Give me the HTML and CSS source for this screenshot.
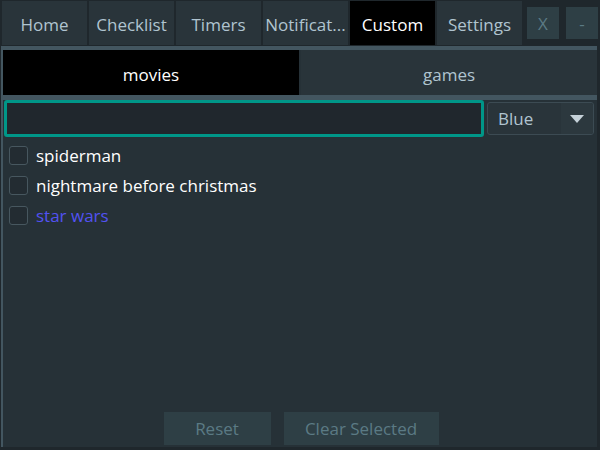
FILE: index.html
```html
<!DOCTYPE html>
<html>
<head>
<meta charset="utf-8">
<link rel="stylesheet" href="styles.css">
</head>
<body>
<div class="window">
  <div class="tabbar">
    <div class="tab">Home</div>
    <div class="tab">Checklist</div>
    <div class="tab">Timers</div>
    <div class="tab">Notificat...</div>
    <div class="tab active">Custom</div>
    <div class="tab">Settings</div>
    <div class="winbtns">
      <div class="winbtn">X</div>
      <div class="winbtn">-</div>
    </div>
  </div>
  <div class="pane">
    <div class="subtabs">
      <div class="subtab active">movies</div>
      <div class="subtab">games</div>
    </div>
    <div class="subpane">
      <div class="entry-row">
        <div class="entry"></div>
        <div class="combo">
          <span class="combo-text">Blue</span>
          <span class="combo-arrow"><svg width="14" height="8" viewBox="0 0 14 8"><path d="M0 0 H14 L7 8 Z" fill="#c5d1d8"/></svg></span>
        </div>
      </div>
      <div class="items">
        <div class="item"><span class="box"></span><span class="label">spiderman</span></div>
        <div class="item"><span class="box"></span><span class="label">nightmare before christmas</span></div>
        <div class="item"><span class="box"></span><span class="label blue">star wars</span></div>
      </div>
      <div class="actions">
        <div class="btn reset">Reset</div>
        <div class="btn clear">Clear Selected</div>
      </div>
    </div>
  </div>
</div>
</body>
</html>
```
FILE: styles.css
```css
html, body {
  margin: 0;
  padding: 0;
}
body {
  width: 600px;
  height: 450px;
  background: #1f272c;
  font-family: "Open Sans", "Noto Sans", sans-serif;
  overflow: hidden;
}
.window {
  width: 600px;
  height: 450px;
  display: flex;
  flex-direction: column;
}
.tabbar {
  height: 46px;
  display: flex;
  padding: 1px 0 0 2px;
  box-sizing: border-box;
  gap: 2px;
}
.tab {
  width: 85px;
  height: 44px;
  box-sizing: border-box;
  padding-top: 3px;
  background: #29343a;
  color: #b0c4d0;
  font-size: 17px;
  display: flex;
  align-items: center;
  justify-content: center;
  white-space: nowrap;
}
.tab.active {
  background: #000;
  color: #ffffff;
}
.winbtns {
  display: flex;
  gap: 7px;
  margin-left: 3px;
  padding-top: 6px;
}
.winbtn {
  width: 32px;
  height: 32px;
  background: #2e3f45;
  color: #5b7a84;
  font-size: 17px;
  display: flex;
  align-items: center;
  justify-content: center;
}
.pane {
  flex: 1;
  display: flex;
  flex-direction: column;
  border-top: 4px solid #435660;
  border-left: 2px solid #435660;
  margin-left: 1px;
  margin-right: 3px;
  margin-bottom: 3px;
  background: #263137;
}
.subtabs {
  display: flex;
  height: 45px;
  gap: 2px;
}
.subtab {
  flex: 1;
  display: flex;
  align-items: center;
  justify-content: center;
  box-sizing: border-box;
  padding-top: 3px;
  background: #29343a;
  color: #b0c4d0;
  font-size: 17px;
}
.subtab.active {
  background: #000;
  color: #fff;
}
.subpane {
  flex: 1;
  display: flex;
  flex-direction: column;
  border-top: 5px solid #435660;
  background: #263137;
}
.entry-row {
  display: flex;
  align-items: center;
  gap: 3px;
  padding-left: 1px;
  height: 37px;
}
.entry {
  width: 474px;
  height: 31px;
  border: 3px solid #009688;
  border-radius: 3px;
  background: #20272d;
}
.combo {
  width: 105px;
  height: 31px;
  border: 1px solid #3c4b53;
  border-radius: 3px;
  background: #29343a;
  display: flex;
  align-items: center;
  overflow: hidden;
}
.combo-text {
  flex: 1;
  padding-left: 10px;
  color: #b0c4d0;
  font-size: 17px;
}
.combo-arrow {
  width: 32px;
  height: 31px;
  background: #2c383e;
  display: flex;
  align-items: center;
  justify-content: center;
}
.items {
  display: flex;
  flex-direction: column;
  padding: 3px 0 0 6px;
}
.item {
  height: 30px;
  display: flex;
  align-items: center;
}
.box {
  width: 17px;
  height: 17px;
  border: 1px solid #47575f;
  border-radius: 3px;
  background: #232c32;
  margin-right: 8px;
}
.label {
  color: #ffffff;
  font-size: 17px;
}
.label.blue {
  color: #5252f2;
}
.actions {
  margin-top: auto;
  display: flex;
  justify-content: center;
  gap: 13px;
  padding: 0 0 2px 2px;
}
.btn {
  height: 33px;
  background: #2e3f45;
  color: #5b7a84;
  font-size: 17px;
  display: flex;
  align-items: center;
  justify-content: center;
}
.btn.reset { width: 107px; }
.btn.clear { width: 155px; }
```
